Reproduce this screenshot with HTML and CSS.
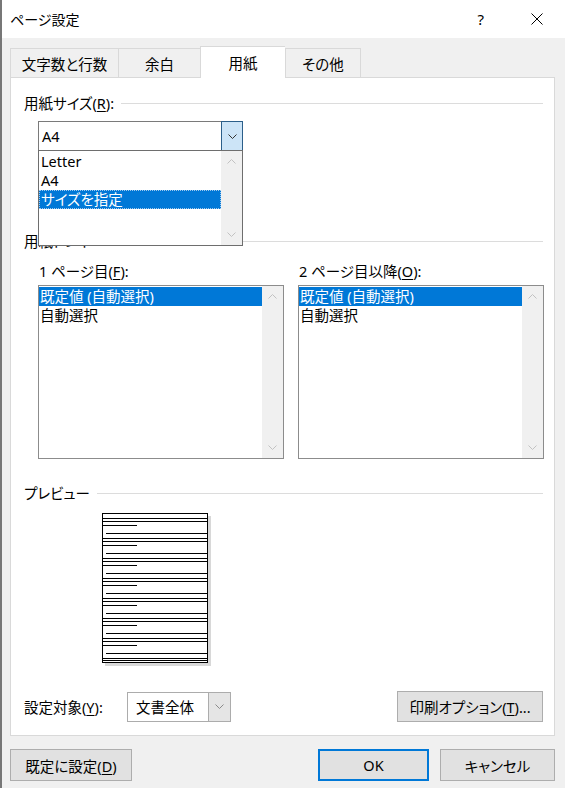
FILE: index.html
```html
<!DOCTYPE html>
<html lang="ja">
<head>
  <meta charset="UTF-8" />
  <title>ページ設定</title>
  <link rel="stylesheet" href="styles.css">
</head>
<body>
  <div class="dialog">
    <div class="titlebar">
      <span class="title">ページ設定</span>
      <span class="help">?</span>
      <svg class="close" width="12" height="12" viewBox="0 0 12 12">
        <path d="M0.5 0.5 L11.5 11.5 M11.5 0.5 L0.5 11.5" stroke="#000" stroke-width="1" fill="none"/>
      </svg>
    </div>

    <div class="body">
      <div class="tabs">
        <div class="tab t1">文字数と行数</div>
        <div class="tab t2">余白</div>
        <div class="tab t3 active">用紙</div>
        <div class="tab t4">その他</div>
      </div>

      <div class="panel">
        <div class="group-head">用紙サイズ(<u>R</u>):</div>

        <div class="combo size-combo">
          <span class="combo-text">A4</span>
          <span class="combo-btn open">
            <svg width="9" height="5" viewBox="0 0 9 5"><path d="M0.5 0.5 L4.5 4.5 L8.5 0.5" stroke="#333" fill="none"/></svg>
          </span>

          <div class="droplist">
            <ul>
              <li>Letter</li>
              <li>A4</li>
              <li class="sel focus">サイズを指定</li>
            </ul>
            <div class="sb">
              <svg width="9" height="5" viewBox="0 0 9 5"><path d="M0.5 4.5 L4.5 0.5 L8.5 4.5" stroke="#c2c2c2" fill="none"/></svg>
              <svg width="9" height="5" viewBox="0 0 9 5"><path d="M0.5 0.5 L4.5 4.5 L8.5 0.5" stroke="#c2c2c2" fill="none"/></svg>
            </div>
          </div>
        </div>

        <div class="group-head tray">用紙トレイ</div>
        <div class="cols">
          <div class="col">
            <div class="col-label">1 ページ目(<u>F</u>):</div>
            <div class="listbox">
              <ul>
                <li class="sel">既定値 (自動選択)</li>
                <li>自動選択</li>
              </ul>
              <div class="sb">
                <svg width="9" height="5" viewBox="0 0 9 5"><path d="M0.5 4.5 L4.5 0.5 L8.5 4.5" stroke="#c2c2c2" fill="none"/></svg>
                <svg width="9" height="5" viewBox="0 0 9 5"><path d="M0.5 0.5 L4.5 4.5 L8.5 0.5" stroke="#c2c2c2" fill="none"/></svg>
              </div>
            </div>
          </div>
          <div class="col">
            <div class="col-label">2 ページ目以降(<u>O</u>):</div>
            <div class="listbox">
              <ul>
                <li class="sel">既定値 (自動選択)</li>
                <li>自動選択</li>
              </ul>
              <div class="sb">
                <svg width="9" height="5" viewBox="0 0 9 5"><path d="M0.5 4.5 L4.5 0.5 L8.5 4.5" stroke="#c2c2c2" fill="none"/></svg>
                <svg width="9" height="5" viewBox="0 0 9 5"><path d="M0.5 0.5 L4.5 4.5 L8.5 0.5" stroke="#c2c2c2" fill="none"/></svg>
              </div>
            </div>
          </div>
        </div>

        <div class="group-head preview-head">プレビュー</div>
        <svg class="page" width="110" height="153" viewBox="0 0 110 153">
          <rect x="3" y="3" width="106" height="150" fill="#d8d8d8"/>
          <rect x="0.5" y="0.5" width="105" height="149" fill="#fff" stroke="#000"/>
          <g stroke="#000" stroke-width="1">
            <path d="M0 5.5 H106 M0 8.5 H106 M0 12.5 H35 M4 20.5 H106"/>
            <path d="M0 25.5 H106 M0 28.5 H106 M0 32.5 H35 M4 40.5 H106"/>
            <path d="M0 45.5 H106 M0 48.5 H106 M0 52.5 H35 M4 60.5 H106"/>
            <path d="M0 65.5 H106 M0 68.5 H106 M0 72.5 H35 M4 80.5 H106"/>
            <path d="M0 85.5 H106 M0 88.5 H106 M0 92.5 H35 M4 100.5 H106"/>
            <path d="M0 105.5 H106 M0 108.5 H106 M0 112.5 H35 M4 120.5 H106"/>
            <path d="M0 125.5 H106 M0 128.5 H106 M0 132.5 H35 M4 140.5 H106"/>
            <path d="M0 145.5 H106 M0 147.5 H106"/>
          </g>
        </svg>

        <div class="apply-row">
          <span class="apply-label">設定対象(<u>Y</u>):</span>
          <div class="combo apply-combo">
            <span class="combo-text">文書全体</span>
            <span class="combo-btn">
              <svg width="9" height="5" viewBox="0 0 9 5"><path d="M0.5 0.5 L4.5 4.5 L8.5 0.5" stroke="#8a8a8a" fill="none"/></svg>
            </span>
          </div>
          <button class="btn print-btn">印刷オプション(<u>T</u>)...</button>
        </div>
      </div>

      <div class="buttons">
        <button class="btn default-btn">既定に設定(<u>D</u>)</button>
        <button class="btn ok-btn">OK</button>
        <button class="btn cancel-btn">キャンセル</button>
      </div>
    </div>
  </div>
</body>
</html>
```

FILE: styles.css
```css
* {
  box-sizing: border-box;
}

body {
  margin: 0;
  font-family: "Noto Sans", "Noto Sans CJK JP", sans-serif;
  font-size: 14.5px;
  font-feature-settings: "palt";
  color: #000;
  background: #f0f0f0;
}

ul {
  list-style: none;
  margin: 0;
  padding: 0;
}

u {
  text-underline-offset: 2px;
}

.dialog {
  width: 565px;
  height: 788px;
  border-left: 2px solid #777;
  background: #f0f0f0;
}

/* title bar */
.titlebar {
  height: 38px;
  background: #fff;
  display: flex;
  align-items: center;
  padding-left: 8px;
}

.title {
  flex: 1;
  font-size: 14px;
}

.help {
  font-size: 15px;
  margin-right: 47px;
}

.close {
  margin-right: 22px;
}

/* tabs */
.body {
  padding: 8px 10px 0 8px;
}

.tabs {
  display: flex;
  align-items: flex-end;
  height: 31px;
}

.tab {
  height: 29px;
  display: flex;
  align-items: center;
  justify-content: center;
  border: 1px solid #d9d9d9;
  border-bottom: none;
  border-right: none;
  background: #f0f0f0;
}

.t1 { width: 108px; }
.t2 { width: 82px; }
.t3 { width: 85px; }
.t4 { width: 76px; border-right: 1px solid #d9d9d9; }

.tab.active {
  height: 32px;
  margin-bottom: -1px;
  background: #fff;
  position: relative;
  z-index: 1;
}

/* panel */
.panel {
  height: 659px;
  background: #fff;
  border: 1px solid #d9d9d9;
  padding: 16px 10px 0 13px;
}

.group-head {
  display: flex;
  align-items: center;
  height: 18px;
  line-height: 18px;
  white-space: nowrap;
}

.group-head::after {
  content: "";
  flex: 1;
  border-top: 1px solid #dcdcdc;
  margin: 0 1px 0 7px;
}

/* combo boxes */
.combo {
  position: relative;
  display: flex;
  height: 30px;
  background: #fff;
  border: 1px solid #7a7a7a;
}

.combo-text {
  flex: 1;
  line-height: 28px;
  padding-left: 3px;
}

.combo-btn {
  width: 22px;
  display: flex;
  align-items: center;
  justify-content: center;
}

.size-combo {
  width: 205px;
  margin: 9px 0 0 14px;
}

.size-combo .combo-btn.open {
  margin: -1px -1px -1px 0;
  background: #cce4f7;
  border: 1px solid #2b5f8a;
}

.droplist {
  position: absolute;
  left: -1px;
  top: 28px;
  width: 205px;
  height: 96px;
  display: flex;
  background: #fff;
  border: 1px solid #6e6e6e;
  z-index: 2;
}

.droplist ul,
.listbox ul {
  flex: 1;
  padding-top: 1px;
}

.droplist li {
  height: 19px;
  line-height: 19px;
  padding-left: 2px;
}

.sel {
  background: #0078d7;
  color: #fff;
}

.focus {
  outline: 1px dotted #9fc9ee;
  outline-offset: -1px;
}

.sb {
  width: 21px;
  background: #f0f0f0;
  display: flex;
  flex-direction: column;
  justify-content: space-between;
  align-items: center;
  padding: 8px 0;
}

/* paper tray */
.tray {
  margin-top: 81px;
}

.cols {
  display: flex;
  gap: 14px;
  margin: 12px 0 0 14px;
}

.col {
  width: 246px;
}

.col-label {
  height: 18px;
  line-height: 18px;
  padding-left: 1px;
}

.listbox {
  display: flex;
  height: 174px;
  margin-top: 5px;
  border: 1px solid #8c8c8c;
  background: #fff;
}

.listbox li {
  height: 19px;
  line-height: 19px;
  padding-left: 1px;
}

/* preview */
.preview-head {
  margin-top: 25px;
}

.page {
  display: block;
  margin: 11px 0 0 78px;
}

/* apply row */
.apply-row {
  display: flex;
  align-items: center;
  margin-top: 25px;
}

.apply-label {
  width: 103px;
}

.apply-combo {
  width: 104px;
  border-color: #acacac;
}

.apply-combo .combo-text {
  padding-left: 8px;
}

.apply-combo .combo-btn {
  background: #e5e5e5;
  border-left: 1px solid #acacac;
}

.btn {
  font: inherit;
  font-feature-settings: "palt";
  color: #000;
  background: #e1e1e1;
  border: 1px solid #adadad;
  padding: 0;
}

.print-btn {
  width: 146px;
  height: 31px;
  margin: 0 1px 0 auto;
}

/* dialog buttons */
.buttons {
  display: flex;
  margin-top: 13px;
}

.buttons .btn {
  height: 32px;
}

.default-btn {
  width: 122px;
}

.ok-btn {
  width: 111px;
  margin-left: auto;
  border: 2px solid #0078d7;
}

.cancel-btn {
  width: 115px;
  margin-left: 11px;
}
```
